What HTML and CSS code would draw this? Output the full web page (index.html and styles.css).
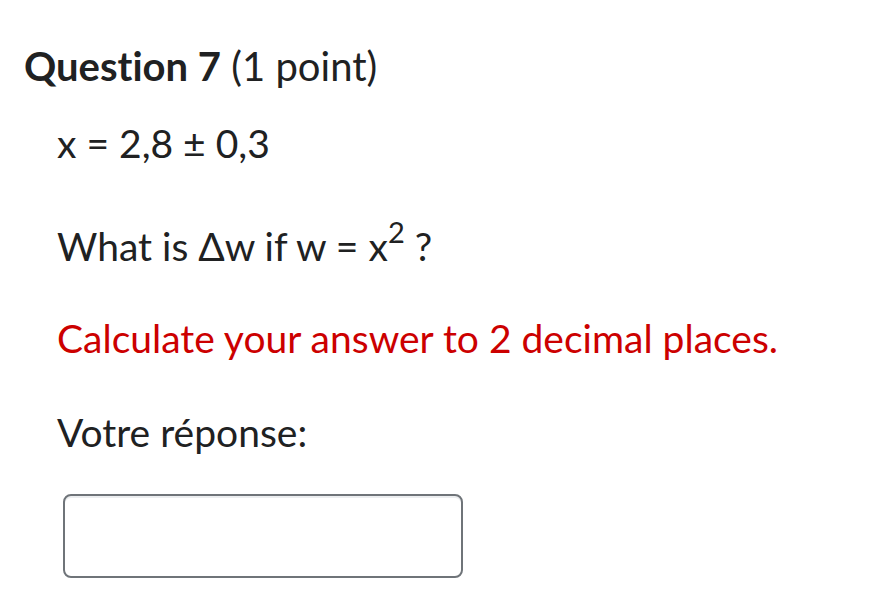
FILE: index.html
```html
<!DOCTYPE html>
<html lang="fr">
<head>
<meta charset="utf-8">
<link rel="stylesheet" href="styles.css">
</head>
<body>
<div class="question">
  <h2 class="q-title"><strong>Question 7</strong> <span class="q-points">(1 point)</span></h2>
  <div class="q-body">
    <p class="line l1">x = 2,8 ± 0,3</p>
    <p class="line l2">What is Δw if w = x<sup>2</sup> ?</p>
    <p class="line l3 red">Calculate your answer to 2 decimal places.</p>
    <p class="line l4">Votre réponse:</p>
    <div class="answer-wrap"><input class="answer" type="text" aria-label="Votre réponse"></div>
  </div>
</div>
</body>
</html>
```

FILE: styles.css
```css
html, body {
  margin: 0;
  padding: 0;
  background: #ffffff;
}
body {
  font-family: Lato, "Noto Sans", sans-serif;
  color: #202122;
  font-variant-ligatures: none;
}
.question {
  padding: 38px 0 0 24px;
}
.q-title {
  margin: 0;
  font-size: 40px;
  line-height: 56px;
  font-weight: 400;
}
.q-title strong {
  font-weight: 700;
}
.q-body {
  padding-left: 33px;
}
.line {
  margin: 0;
  font-size: 39px;
  line-height: 58px;
}
.l1 { margin-top: 20px; }
.l2 { margin-top: 45px; }
.l3 { margin-top: 34px; }
.l4 { margin-top: 36px; }
.line sup {
  font-size: 29px;
  line-height: 0;
  vertical-align: 18px;
}
.red {
  color: #cc0000;
}
.answer-wrap {
  margin-top: 33px;
  padding-left: 6px;
}
.answer {
  box-sizing: border-box;
  width: 400px;
  height: 84px;
  border: 2px solid #6f7479;
  border-radius: 8px;
  box-shadow: inset 0 2px 0 #eceef0;
  background: #fff;
  margin: 0;
  padding: 0 12px;
  outline: none;
  font-family: Lato, sans-serif;
  font-size: 28px;
  display: block;
}
```
